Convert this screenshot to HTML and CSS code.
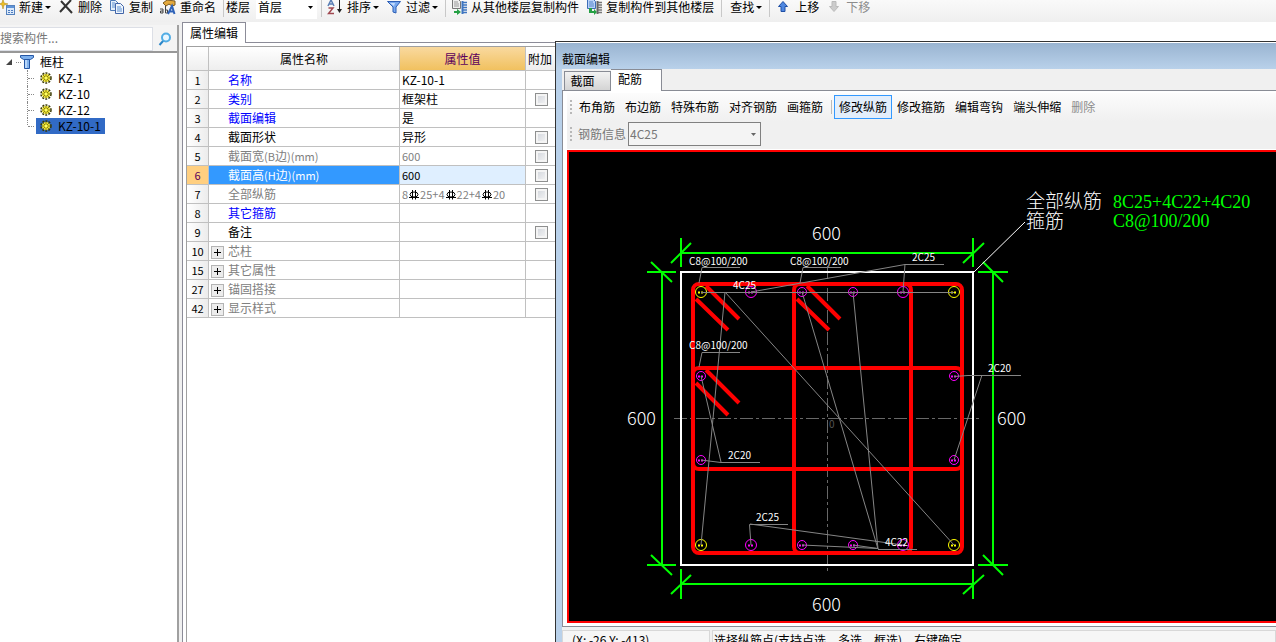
FILE: index.html
```html
<!DOCTYPE html>
<html lang="zh-CN">
<head>
    <meta charset="UTF-8">
    <meta name="viewport" content="width=device-width, initial-scale=1.0">
    <title>属性编辑</title>
    <link rel="stylesheet" href="styles.css">
</head>
<body>

<div class="toolbar">
    <button class="tool">
        <svg width="16" height="16" viewBox="0 0 16 16"><path d="M4 0l1 4 4 1-4 1-1 4-1-4-3-1 3-1z" fill="#f0c020" stroke="#a88010" stroke-width=".5"/><rect x="7.500" y="6.500" width="8" height="9" fill="#dbe9fa" stroke="#5582bd"/><path d="M8 7h7v2H8z" fill="#5f94d8"/><path d="M9 11h2v1H9zM12 11h2v1h-2zM9 13h2v1H9zM12 13h2v1h-2z" fill="#4c7cc0"/></svg>
        新建<i class="arrow"></i>
    </button>
    <button class="tool">
        <svg width="16" height="16" viewBox="0 0 16 16"><path d="M3 2l11 12M13 1L2 13" fill="none" stroke="#333" stroke-width="2"/></svg>
        删除
    </button>
    <button class="tool">
        <svg width="16" height="16" viewBox="0 0 16 16"><path d="M1.500 1.500h5l3 3v7h-8z" fill="#e4effb" stroke="#4e7ab8"/><path d="M3 4h3M3 6h4M3 8h4" stroke="#5d8fd0"/><path d="M6.500 4.500h5l3 3v7h-8z" fill="#eef5fd" stroke="#4265a8"/><path d="M8 8h4M8 10h5M8 12h5" stroke="#5d8fd0"/></svg>
        复制
    </button>
    <button class="tool">
        <svg width="16" height="16" viewBox="0 0 16 16"><path d="M3 4l4-3 8 1v4l-3 1-3-2-3 2z" fill="#e4a93c" stroke="#7c5a20"/><path d="M0 10h3v4H.500v-2H3M5.500 7v7h2v-3h-2" fill="none" stroke="#444"/><path d="M8 15l4-8 2.500 8M9 12.500h4" fill="none" stroke="#2e62b8" stroke-width="2"/></svg>
        重命名
    </button>
    <span class="sep"></span>
    <label for="floor">楼层</label>
    <select id="floor" class="floor"><option>首层</option></select>
    <span class="sep"></span>
    <button class="tool">
        <svg width="16" height="16" viewBox="0 0 16 16"><path d="M1 7l3-6 3 6M2 5h4" fill="none" stroke="#5a7fb5" stroke-width="1.500"/><path d="M1.500 9H6l-4.500 5.500H7" fill="none" stroke="#a04850" stroke-width="1.500"/><path d="M12.500 0v13" stroke="#222"/><path d="M10 10h5l-2.500 4z" fill="#222"/></svg>
        排序<i class="arrow"></i>
    </button>
    <button class="tool">
        <svg width="16" height="16" viewBox="0 0 16 16"><path d="M1.500 2.500h13L10 8v6l-3-1V8z" fill="#79a9ef" stroke="#2d5eb5"/><path d="M4 4h5L8 7z" fill="#c5dcfb"/></svg>
        过滤<i class="arrow"></i>
    </button>
    <span class="sep"></span>
    <button class="tool">
        <svg width="16" height="16" viewBox="0 0 16 16"><path d="M1.500.500h6l2 2v7h-8z" fill="#eee" stroke="#777"/><path d="M3 3h4M3 5h5M3 7h5" stroke="#999"/><path d="M11 3.500h5M11 6h5M11 8.500h5M11 11h5M11 13.500h5" stroke="#3e75c0" stroke-width="1.500"/><path d="M11.500 2v13" stroke="#3e75c0" stroke-width="2"/><path d="M3 10v2h3v-2l4 3-4 3v-2H3z" fill="#25a044"/></svg>
        从其他楼层复制构件
    </button>
    <button class="tool">
        <svg width="16" height="16" viewBox="0 0 16 16"><path d="M1.500.500h6l2 2v7h-8z" fill="#b9d2f8" stroke="#3d6db8"/><path d="M3 3h4M3 5h5M3 7h5" stroke="#5585cc"/><path d="M11 3.500h5M11 6h5M11 8.500h5M11 11h5M11 13.500h5" stroke="#777" stroke-width="1.500"/><path d="M11.500 2v13" stroke="#666" stroke-width="2"/><path d="M3 9v5h5v2l3-3-3-3v2H6V9z" fill="#25a044"/></svg>
        复制构件到其他楼层
    </button>
    <span class="sep"></span>
    <button class="tool find">查找<i class="arrow"></i></button>
    <span class="sep"></span>
    <button class="tool">
        <svg width="16" height="16" viewBox="0 0 16 16"><path d="M8 2.500l4.500 5H10v5H6v-5H3.500z" fill="#4e87e0" stroke="#1f4fa5"/></svg>
        上移
    </button>
    <button class="tool" disabled>
        <svg width="16" height="16" viewBox="0 0 16 16"><path d="M8 12.500l4.500-5H10v-5H6v5H3.500z" fill="#ccc" stroke="#bbb"/></svg>
        下移
    </button>
</div>

<div class="main">
    <div class="tree-panel">
        <div class="search">
            <input type="text" placeholder="搜索构件..." aria-label="搜索构件">
            <button aria-label="搜索">
                <svg width="14" height="14" viewBox="0 0 14 14"><path d="M5.500 8.500L1.500 13" stroke="#2b86c8" stroke-width="2"/><circle cx="8" cy="5.500" r="4" fill="#eaf7ff" stroke="#52ade5" stroke-width="2"/></svg>
            </button>
        </div>
        <ul class="tree">
            <li class="root">
                <div class="node">
                    <svg width="36" height="16" viewBox="0 0 36 16"><path d="M6 11h6V5z" fill="#444"/><path d="M16 8.500h5" stroke="#888" stroke-dasharray="1 1"/><path d="M20.500 1.500h13v2l-3 2h-7l-3-2z" fill="#7cb0ee" stroke="#2456a5"/><path d="M24.500 5.500h5v9h-5z" fill="#b9d8fb" stroke="#2456a5"/><path d="M28 6v8" stroke="#4f8ede"/></svg>
                    <span>框柱</span>
                </div>
                <ul>
                    <li><svg class="gear" width="12" height="12" viewBox="0 0 12 12"><use href="#gear"/></svg><span>KZ-1</span></li>
                    <li><svg class="gear" width="12" height="12" viewBox="0 0 12 12"><use href="#gear"/></svg><span>KZ-10</span></li>
                    <li><svg class="gear" width="12" height="12" viewBox="0 0 12 12"><use href="#gear"/></svg><span>KZ-12</span></li>
                    <li class="selected"><div class="pick"><svg class="gear" width="12" height="12" viewBox="0 0 12 12"><use href="#gear"/></svg><span>KZ-10-1</span></div></li>
                </ul>
            </li>
        </ul>
    </div>

    <div class="props">
        <div class="props-tabs"><button class="props-tab">属性编辑</button></div>
        <div class="props-body">
            <table class="grid">
                <thead>
                    <tr><th class="num"></th><th class="name">属性名称</th><th class="value">属性值</th><th class="extra">附加</th></tr>
                </thead>
                <tbody>
                    <tr><th>1</th><td class="blue">名称</td><td>KZ-10-1</td><td></td></tr>
                    <tr><th>2</th><td class="blue">类别</td><td>框架柱</td><td><input type="checkbox" aria-label="类别附加"></td></tr>
                    <tr><th>3</th><td class="blue">截面编辑</td><td>是</td><td></td></tr>
                    <tr><th>4</th><td>截面形状</td><td>异形</td><td><input type="checkbox" aria-label="截面形状附加"></td></tr>
                    <tr class="gray"><th>5</th><td>截面宽<span class="latin">(B</span>边<span class="latin">)(mm)</span></td><td><span class="latin">600</span></td><td><input type="checkbox" aria-label="截面宽附加"></td></tr>
                    <tr class="current"><th>6</th><td>截面高<span class="latin">(H</span>边<span class="latin">)(mm)</span></td><td><span class="latin">600</span></td><td><input type="checkbox" aria-label="截面高附加"></td></tr>
                    <tr class="gray"><th>7</th><td>全部纵筋</td><td><span class="latin">8<svg class="bar" width="12" height="10" viewBox="1 0 12 10"><use href="#rebar"/></svg>25+4<svg class="bar" width="12" height="10" viewBox="1 0 12 10"><use href="#rebar"/></svg>22+4<svg class="bar" width="12" height="10" viewBox="1 0 12 10"><use href="#rebar"/></svg>20</span></td><td><input type="checkbox" aria-label="全部纵筋附加"></td></tr>
                    <tr><th>8</th><td class="blue">其它箍筋</td><td></td><td></td></tr>
                    <tr><th>9</th><td>备注</td><td></td><td><input type="checkbox" aria-label="备注附加"></td></tr>
                    <tr class="gray group"><th>10</th><td><button class="expand" aria-label="展开芯柱"></button>芯柱</td><td></td><td></td></tr>
                    <tr class="gray group"><th>15</th><td><button class="expand" aria-label="展开其它属性"></button>其它属性</td><td></td><td></td></tr>
                    <tr class="gray group"><th>27</th><td><button class="expand" aria-label="展开锚固搭接"></button>锚固搭接</td><td></td><td></td></tr>
                    <tr class="gray group"><th>42</th><td><button class="expand" aria-label="展开显示样式"></button>显示样式</td><td></td><td></td></tr>
                </tbody>
            </table>
        </div>
    </div>
</div>

<div class="window">
    <div class="title">截面编辑</div>
    <div class="window-body">
        <div class="tabs">
            <button class="tab">截面</button>
            <button class="tab active">配筋</button>
        </div>
        <div class="page">
            <div class="actions">
                <span class="grip"></span>
                <button>布角筋</button>
                <button>布边筋</button>
                <button>特殊布筋</button>
                <button>对齐钢筋</button>
                <button>画箍筋</button>
                <span class="line"></span>
                <button class="on">修改纵筋</button>
                <button>修改箍筋</button>
                <button>编辑弯钩</button>
                <button>端头伸缩</button>
                <button disabled>删除</button>
            </div>
            <div class="info">
                <span class="grip"></span>
                <label for="rebar-info">钢筋信息</label>
                <select id="rebar-info" disabled><option>4C25</option></select>
            </div>
            <div class="canvas">
                <svg width="707" height="469" viewBox="569 152 707 469">
                    <!-- 轴线 -->
                    <g stroke="#686868" fill="none" stroke-dasharray="13 3 3 3">
                        <path d="M674 418.500H981"/>
                        <path d="M827.500 266V573"/>
                    </g>
                    <text x="829" y="428" class="t-small" fill="#555">0</text>

                    <rect x="681" y="272" width="292" height="293" fill="none" stroke="#fff" stroke-width="2"/>

                    <!-- 箍筋 -->
                    <g stroke="#f00" stroke-width="4" fill="none">
                        <rect x="693" y="284" width="269" height="269" rx="6"/>
                        <rect x="794" y="284" width="117" height="269" rx="6"/>
                        <rect x="693" y="368" width="269" height="101" rx="6"/>
                        <path d="M696 299L728 330M706 286L739 319"/>
                        <path d="M797 299L829 330M807 286L840 319"/>
                        <path d="M696 383L728 415M706 370L739 403"/>
                    </g>

                    <!-- 尺寸标注 -->
                    <g stroke="#0f0" stroke-width="2" fill="none">
                        <path d="M681 253H973M681 238V267M973 238V267M671 263L691 243M963 263L984 243"/>
                        <path d="M681 584H973M681 569V599M973 569V599M671 594L691 575M963 594L984 575"/>
                        <path d="M662 272V565M647 272H676M647 565H676M651 262L672 282M651 555L672 575"/>
                        <path d="M993 272V565M978 272H1008M978 565H1008M983 262L1003 282M983 555L1003 575"/>
                    </g>
                    <g class="t-size" fill="#fff">
                        <text x="812" y="240">600</text>
                        <text x="812" y="611">600</text>
                        <text x="627" y="425">600</text>
                        <text x="997" y="425">600</text>
                    </g>

                    <!-- 纵筋 -->
                    <g fill="none">
                        <g stroke="#ff0">
                            <circle cx="701" cy="292" r="5.500"/><circle cx="954" cy="292" r="5.500"/>
                            <circle cx="701" cy="545" r="5.500"/><circle cx="954" cy="545" r="5.500"/>
                            <path d="M698 292.500h6M951 292.500h6M698 545.500h6M951 545.500h6" stroke-width="2" stroke-dasharray="2 1"/>
                        </g>
                        <g stroke="#f0f">
                            <circle cx="751" cy="292" r="5.500"/><circle cx="903" cy="292" r="5.500"/>
                            <circle cx="751" cy="545" r="5.500"/><circle cx="903" cy="545" r="5.500"/>
                            <circle cx="802" cy="292" r="4.500"/><circle cx="853" cy="292" r="4.500"/>
                            <circle cx="802" cy="545" r="4.500"/><circle cx="853" cy="545" r="4.500"/>
                            <circle cx="701" cy="376" r="4.500"/><circle cx="701" cy="460" r="4.500"/>
                            <circle cx="954" cy="376" r="4.500"/><circle cx="954" cy="460" r="4.500"/>
                            <path d="M748 292.500h6M900 292.500h6M748 545.500h6M900 545.500h6M799 292.500h6M850 292.500h6M799 545.500h6M850 545.500h6M698 376.500h6M698 460.500h6M951 376.500h6M951 460.500h6" stroke-width="2" stroke-dasharray="2 1"/>
                        </g>
                    </g>

                    <!-- 引线 -->
                    <g stroke="#858585" fill="none">
                        <path d="M701 292.500H954M725 292L701 545M725 292L954 545"/>
                        <path d="M699 283L702 267.500H740M800 283L803 267.500H841M699 367L702 352.500H740"/>
                        <path d="M751 292L905 264.500H944M903 292L905 264"/>
                        <path d="M802 292L878 549M853 292L878 549M802 545L878 548.500M853 545L878 548.500M878 549.500H917"/>
                        <path d="M751 545L749.500 524.500H788M750 524L903 545"/>
                        <path d="M701 376L721 462M701 460L721 462.500H760"/>
                        <path d="M954 376.500L968 375.500H1021M982 375L954 460"/>
                    </g>
                    <path d="M974 272L1025 222" stroke="#fff"/>
                    <g class="t-small" fill="#fff">
                        <text x="689" y="265">C8@100/200</text>
                        <text x="790" y="265">C8@100/200</text>
                        <text x="689" y="349">C8@100/200</text>
                        <text x="733" y="289">4C25</text>
                        <text x="912" y="261">2C25</text>
                        <text x="988" y="372">2C20</text>
                        <text x="728" y="459">2C20</text>
                        <text x="756" y="521">2C25</text>
                        <text x="885" y="546">4C22</text>
                    </g>
                    <g class="t-note" fill="#fff">
                        <text x="1026" y="208">全部纵筋</text>
                        <text x="1026" y="228">箍筋</text>
                    </g>
                    <g class="t-spec" fill="#0f0">
                        <text x="1113" y="208">8C25+4C22+4C20</text>
                        <text x="1113" y="227">C8@100/200</text>
                    </g>
                </svg>
            </div>
        </div>
        <div class="status">
            <div class="coords">(X: -26 Y: -413)</div>
            <div class="hint">选择纵筋点(支持点选，多选，框选)，右键确定</div>
        </div>
    </div>
</div>

<svg class="symbols" width="0" height="0">
    <defs>
        <g id="gear">
            <circle cx="6" cy="6" r="4" fill="#f0e430"/>
            <circle cx="6" cy="6" r="5" fill="none" stroke="#3a3a00" stroke-width="1.500" stroke-dasharray="2 1.200"/>
            <path d="M6 2v8M2 6h8M3 3l6 6M9 3L3 9" stroke="#5c5600" stroke-width=".7"/>
            <circle cx="6" cy="6" r="1.500" fill="#ffff60"/>
        </g>
        <g id="rebar" fill="none" stroke="#000">
            <ellipse cx="7" cy="4.500" rx="4" ry="2.500"/>
            <path d="M5.500 0V9.500M8.500 0V9.500M2 7.500H12"/>
        </g>
    </defs>
</svg>

</body>
</html>
```
FILE: styles.css
```css
* {
    box-sizing: border-box;
}

html, body {
    margin: 0;
    padding: 0;
    height: 100%;
}

body {
    display: flex;
    flex-direction: column;
    position: relative;
    overflow: hidden;
    background: #f0f0f0;
    color: #000;
    font-family: "Noto Sans CJK SC", sans-serif;
    font-size: 12px;
    line-height: 16px;
}

button, input, select {
    font: inherit;
    color: inherit;
    margin: 0;
    padding: 0;
    border: none;
    border-radius: 0;
    background: none;
}

button:disabled {
    color: #8c8c8c;
}

ul {
    list-style: none;
    margin: 0;
    padding: 0;
}

svg {
    display: block;
    flex: none;
}

.symbols {
    position: absolute;
}

/* main toolbar */
.toolbar {
    display: flex;
    align-items: center;
    flex: none;
    gap: 1px;
    height: 30px;
    margin-top: -8px;
    margin-left: -4px;
    background: linear-gradient(#fdfdfd, #efefef);
    white-space: nowrap;
}

.tool {
    display: flex;
    align-items: center;
    flex: none;
    gap: 4px;
    padding: 0 3px;
}

.find {
    padding-left: 6px;
}

.arrow {
    border: 3px solid transparent;
    border-top-color: #000;
    border-bottom: none;
    margin-left: -2px;
}

.sep {
    width: 1px;
    height: 20px;
    margin: 0 1px 0 3px;
    background: #c8c8c8;
}

.floor {
    width: 61px;
    height: 24px;
    margin-left: 5px;
    padding-left: 2px;
    appearance: none;
    background: #fff url("data:image/svg+xml,%3Csvg xmlns='http://www.w3.org/2000/svg' width='5' height='3'%3E%3Cpath d='M0 0h5L2.500 3z'/%3E%3C/svg%3E") no-repeat right 4px center;
}

/* component tree */
.main {
    display: flex;
    flex: 1;
    min-height: 0;
}

.tree-panel {
    display: flex;
    flex-direction: column;
    flex: none;
    width: 179px;
    margin-top: 3px;
    border-right: 2px solid #a0a0a0;
    background: #fff;
}

.search {
    display: flex;
    height: 28px;
    padding-top: 2px;
    border-bottom: 2px solid #989898;
    background: #f4f4f4;
}

.search input {
    flex: 1;
    min-width: 0;
    height: 24px;
    padding-bottom: 3px;
    border: 1px solid #dcdfe6;
    border-left: none;
    background: #fff;
}

.search input::placeholder {
    color: #777;
}

.search button {
    display: flex;
    align-items: center;
    justify-content: center;
    width: 24px;
}

.tree {
    flex: 1;
    padding-top: 1px;
}

.node {
    display: flex;
    gap: 4px;
}

.root ul {
    margin-left: 27px;
}

.root li {
    display: flex;
    align-items: center;
    height: 16px;
    border-left: 1px dotted #888;
    gap: 6px;
}

.root li::before {
    content: "";
    width: 6px;
    border-top: 1px dotted #888;
}

/* the guide line stops at the middle of the last row */
.root .selected {
    gap: 2px;
    border-left-color: transparent;
    background: repeating-linear-gradient(#888 0 1px, transparent 1px 2px) border-box no-repeat 0 0 / 1px 8px;
}

.pick {
    display: flex;
    align-items: center;
    gap: 6px;
    padding: 0 4px;
    background: #316ac5;
}

/* property grid */
.props {
    display: flex;
    flex-direction: column;
    flex: 1;
    margin-left: 3px;
    background: #fff;
}

.props-tabs {
    height: 21px;
    border-bottom: 1px solid #8c8c98;
}

.props-tab {
    height: 21px;
    width: 64px;
    border: 1px solid #8c8c98;
    border-bottom: none;
    background: #fff;
}

.props-body {
    flex: 1;
    padding: 3px 0 0 3px;
    border-left: 1px solid #8c8c98;
    background: linear-gradient(#a0a0a0, #a0a0a0) no-repeat 3px 3px / 1px 100%;
}

.grid {
    table-layout: fixed;
    width: 371px;
    border-collapse: separate;
    border-spacing: 0;
    border-top: 1px solid #a0a0a0;
    border-left: 1px solid #a0a0a0;
}

.grid th, .grid td {
    height: 19px;
    padding: 0;
    border-right: 1px solid #c0c0c0;
    border-bottom: 1px solid #c0c0c0;
    font-weight: normal;
    white-space: nowrap;
}

.grid thead th {
    height: 24px;
    background: linear-gradient(#fff, #eee);
}

.grid .num {
    width: 22px;
}

.grid .name {
    width: 191px;
}

.grid thead .value {
    width: 126px;
    background: linear-gradient(#f9d99f, #f1c15f);
    color: #5c005c;
}

.grid .extra {
    padding-left: 2px;
    text-align: left;
}

.grid tbody th {
    background: linear-gradient(90deg, #fff, #ececec);
    font-size: 11px;
}

.grid td:nth-child(2) {
    padding-left: 19px;
}

.grid td:nth-child(3) {
    padding-left: 2px;
}

.grid td:nth-child(4) {
    text-align: center;
}

.grid .blue {
    color: #00f;
}

.gray td {
    color: #808080;
}

.grid .current th {
    background: #ffcf80;
    color: #5c005c;
}

.current td:nth-child(2) {
    background: #39f;
    color: #fff;
}

.current td:nth-child(3) {
    background: #dfefff;
}

.grid .group td:nth-child(2) {
    padding-left: 2px;
}

.latin {
    font-size: 11px;
}

.bar {
    display: inline-block;
    vertical-align: -1px;
}

.grid input {
    display: block;
    width: 13px;
    height: 13px;
    margin: 0 auto;
    appearance: none;
    border: 1px solid #8e8f8f;
    background: linear-gradient(135deg, #cfd3da, #f6f6f6);
    box-shadow: inset 0 0 0 2px #f4f4f4;
}

.expand {
    width: 13px;
    height: 13px;
    margin-right: 4px;
    border: 1px solid #b4b4b4;
    vertical-align: -2px;
    background:
        linear-gradient(#000, #000) center / 7px 1px no-repeat,
        linear-gradient(#000, #000) center / 1px 7px no-repeat,
        #ececec;
}

/* section editor window */
.window {
    position: absolute;
    left: 555px;
    right: 0;
    top: 41px;
    bottom: 0;
    overflow: hidden;
    border-top: 1px solid #333;
    border-left: 1px solid #333;
    padding-left: 6px;
    background: #b9d1ea;
}

.title {
    height: 27px;
    margin-left: -6px;
    padding: 8px 0 0 6px;
    border-top: 1px solid #fff;
    background: linear-gradient(#99b4d1, #b9d1ea);
}

.window-body {
    background: #f0f0f0;
}

.tabs {
    display: flex;
    align-items: flex-end;
    height: 22px;
    padding-left: 2px;
    border-bottom: 1px solid #898c95;
}

.tab {
    width: 47px;
    height: 19px;
    padding-right: 10px;
    border: 1px solid #898c95;
    border-bottom: none;
    background: linear-gradient(#f2f2f2, #d4d4d4);
}

.tab.active {
    width: 51px;
    height: 22px;
    margin-bottom: -1px;
    border-left: none;
    padding: 0 12px 3px 0;
    background: #fff;
}

.page {
    padding: 2px 0 3px 4px;
    border-left: 1px solid #898c95;
    border-bottom: 1px solid #898c95;
    background: #fff;
}

.actions, .info {
    display: flex;
    align-items: center;
    height: 28px;
    padding-left: 3px;
    background: linear-gradient(#fcfcfc, #f0f0f0);
    white-space: nowrap;
}

.grip {
    width: 2px;
    height: 14px;
    margin-right: 2px;
    background: repeating-linear-gradient(#b8b8b8 0 2px, transparent 2px 4px);
}

.actions button {
    flex: none;
    height: 24px;
    padding: 0 5px;
}

.actions .line {
    width: 1px;
    height: 14px;
    margin: 0 2px 0 3px;
    background: #bbb;
}

.actions .on {
    border: 1px solid #39f;
    padding: 0 4px;
    background: #e3eefb;
}

.info {
    padding-bottom: 2px;
    background: #f0f0f0;
    color: #777;
}

.info label {
    margin: 0 2px 0 4px;
}

.info select {
    width: 133px;
    height: 24px;
    padding-left: 1px;
    appearance: none;
    opacity: 1;
    border: 1px solid #808080;
    background: #f4f4f4 url("data:image/svg+xml,%3Csvg xmlns='http://www.w3.org/2000/svg' width='5' height='3'%3E%3Cpath d='M0 0h5L2.500 3z' fill='%23666'/%3E%3C/svg%3E") no-repeat right 4px center;
}

.canvas {
    overflow: hidden;
    margin-top: 1px;
    border: 2px solid #f00;
    border-right: none;
    background: #000;
}

.t-small {
    font-size: 10px;
}

.t-size {
    font-size: 18px;
    font-weight: 300;
}

.t-note {
    font-size: 19px;
    font-weight: 300;
}

.t-spec {
    font-family: "Liberation Serif", serif;
    font-size: 18px;
}

.status {
    display: flex;
    gap: 2px;
    padding-top: 3px;
    white-space: nowrap;
}

.status div {
    height: 22px;
    padding-top: 1px;
    border: 1px solid #d8d8d8;
    background: #f6f6f6;
}

.status .coords {
    width: 148px;
    padding-left: 9px;
}

.status .hint {
    flex: 1;
    padding-left: 1px;
}
```
